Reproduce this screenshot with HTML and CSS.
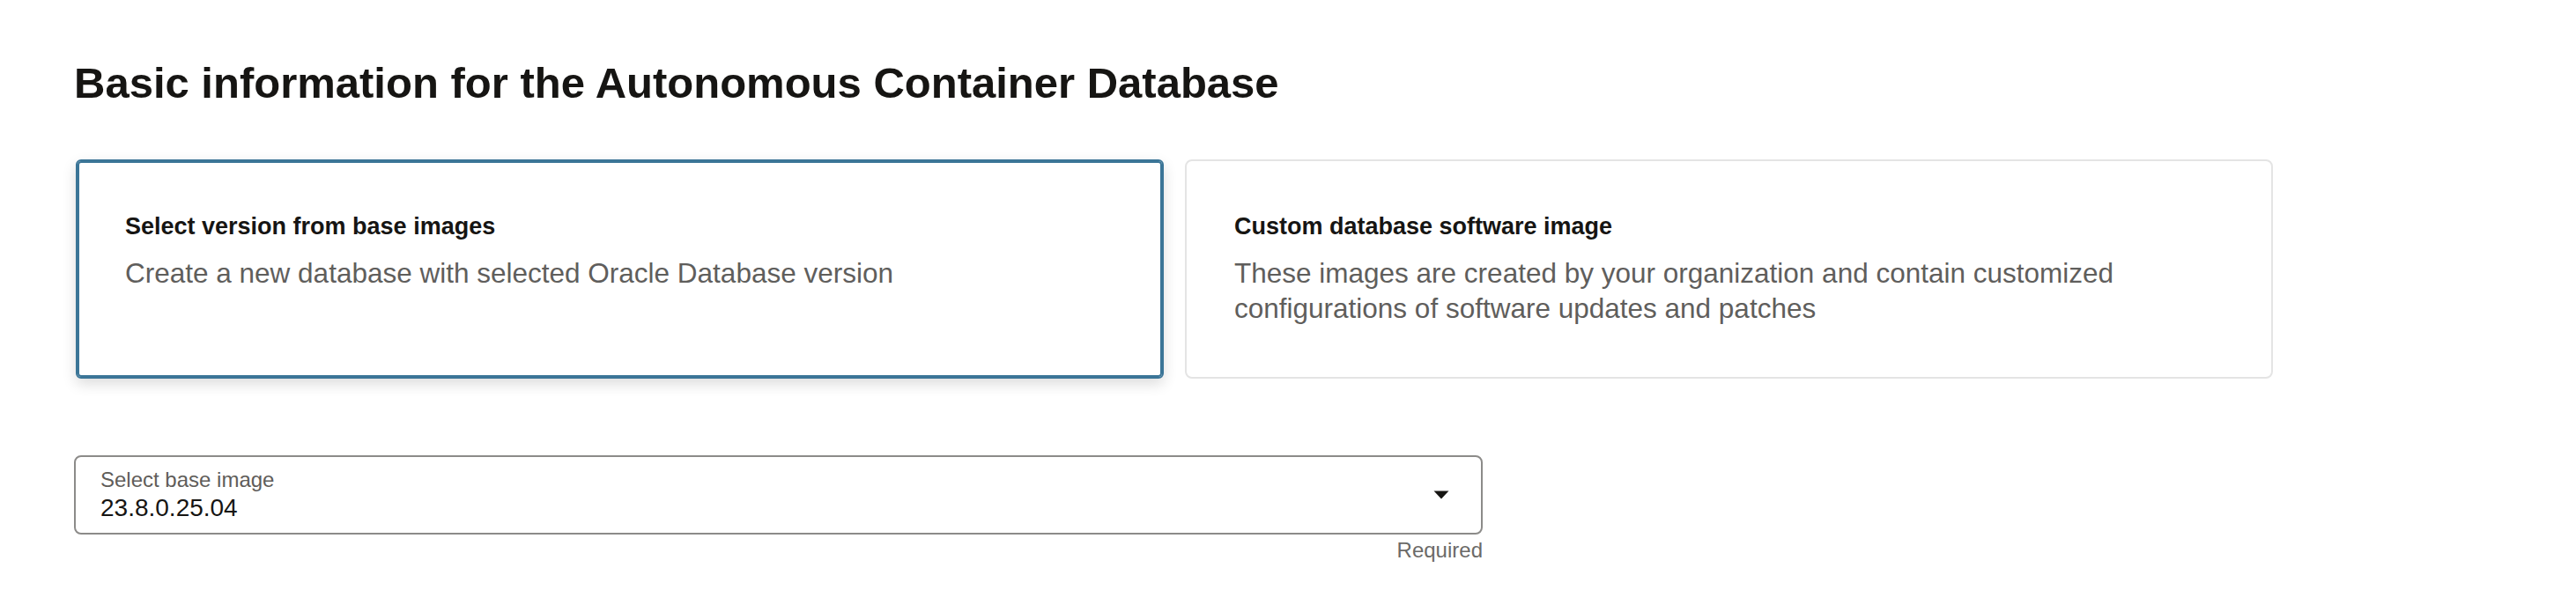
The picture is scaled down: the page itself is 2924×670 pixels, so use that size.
FILE: index.html
```html
<!DOCTYPE html>
<html lang="en">
<head>
<meta charset="utf-8">
<title>Basic information for the Autonomous Container Database</title>
<link rel="stylesheet" href="styles.css">
</head>
<body>
<main class="page">
  <h1 class="page-title">Basic information for the Autonomous Container Database</h1>
  <div class="cards">
    <div class="card card-selected">
      <div class="card-title">Select version from base images</div>
      <div class="card-desc">Create a new database with selected Oracle Database version</div>
    </div>
    <div class="card">
      <div class="card-title">Custom database software image</div>
      <div class="card-desc">These images are created by your organization and contain customized configurations of software updates and patches</div>
    </div>
  </div>
  <div class="field-wrap">
    <div class="select">
      <div class="select-text">
        <div class="select-label">Select base image</div>
        <div class="select-value">23.8.0.25.04</div>
      </div>
      <svg class="select-arrow" width="18" height="10" viewBox="0 0 18 10" aria-hidden="true">
        <path d="M0.5 0.5 L17.5 0.5 L9 9.5 Z" fill="#161513"/>
      </svg>
    </div>
    <div class="helper">Required</div>
  </div>
</main>
</body>
</html>
```

FILE: styles.css
```css
html, body {
  margin: 0;
  padding: 0;
  background: #ffffff;
}

body {
  font-family: "Liberation Sans", Arial, sans-serif;
  color: #161513;
}

.page {
  padding: 64px 0 0 84px;
}

.page-title {
  margin: 0;
  font-size: 49px;
  line-height: 60px;
  font-weight: 700;
  color: #161513;
}

.cards {
  display: grid;
  grid-template-columns: 1235px 1235px;
  column-gap: 24px;
  margin-top: 57px;
  padding-left: 2px;
}

.card {
  box-sizing: border-box;
  height: 249px;
  border: 2px solid #e4e4e4;
  border-radius: 8px;
  padding: 56px 54px 0 54px;
  background: #ffffff;
}

.card-selected {
  border-color: #3b7597;
  box-shadow: inset 0 0 0 2px #3b7597, 0 6px 16px rgba(0, 0, 0, 0.14);
  border-radius: 6px;
}

.card-title {
  font-size: 27px;
  line-height: 36px;
  font-weight: 700;
  color: #161513;
}

.card-desc {
  margin-top: 15px;
  font-size: 31.5px;
  line-height: 40px;
  color: #5f5e5c;
}

.field-wrap {
  width: 1599px;
  margin-top: 87px;
}

.select {
  box-sizing: border-box;
  height: 90px;
  display: flex;
  align-items: center;
  border: 2px solid #8c8b89;
  border-radius: 8px;
  padding: 10px 36px 10px 28px;
}

.select-text {
  flex: 1;
  display: flex;
  flex-direction: column;
}

.select-label {
  font-size: 24px;
  line-height: 30px;
  color: #5f5d5a;
}

.select-value {
  font-size: 28px;
  line-height: 34px;
  color: #161513;
}

.select-arrow {
  display: block;
  flex: none;
}

.helper {
  margin-top: 3px;
  text-align: right;
  font-size: 24px;
  line-height: 30px;
  color: #6b6a68;
}
```
